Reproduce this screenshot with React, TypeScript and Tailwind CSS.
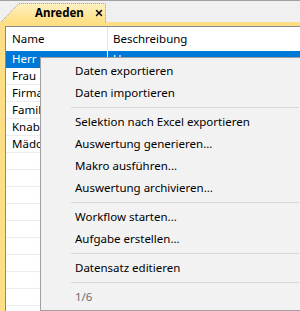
import { X } from "lucide-react"

const rows = [
  { name: "Herr", desc: "Herr" },
  { name: "Frau" },
  { name: "Firma" },
  { name: "Familie" },
  { name: "Knabe" },
  { name: "Mädchen" },
]

type Entry = { label: string; muted?: boolean } | "sep"

const menu: Entry[] = [
  { label: "Daten exportieren" },
  { label: "Daten importieren" },
  "sep",
  { label: "Selektion nach Excel exportieren" },
  { label: "Auswertung generieren..." },
  { label: "Makro ausführen..." },
  { label: "Auswertung archivieren..." },
  "sep",
  { label: "Workflow starten..." },
  { label: "Aufgabe erstellen..." },
  "sep",
  { label: "Datensatz editieren" },
  "sep",
  { label: "1/6", muted: true },
]

function Tab() {
  return (
    <div className="relative ml-[1px] mt-[2px] flex h-[19px] w-[105px] items-center">
      <svg className="absolute inset-0" width="105" height="19" viewBox="0 0 105 19">
        <defs>
          <linearGradient id="tabfill" x1="0" y1="0" x2="0" y2="1">
            <stop offset="0" stopColor="#fff1c0" />
            <stop offset="1" stopColor="#ffdf85" />
          </linearGradient>
        </defs>
        <polygon points="0,19 18,0.5 104.5,0.5 104.5,19" fill="url(#tabfill)" />
        <polyline points="0,19 18,0.5 104.5,0.5 104.5,19" fill="none" stroke="#9a9a9a" strokeWidth="1" strokeDasharray="1 1" />
      </svg>
      <span className="relative ml-[34px] text-[11.5px] font-bold text-black">Anreden</span>
      <X className="relative ml-[10px] h-[10px] w-[10px] text-black" strokeWidth={3.5} />
    </div>
  )
}

export default function App() {
  return (
    <div className="relative h-[311px] w-[300px] overflow-hidden bg-[#f0f0f0] font-['Noto_Sans',sans-serif] text-[11.5px] text-black">
      <div className="h-[1px] bg-[#a0a0a0]" />
      <Tab />
      <div className="h-[4px] bg-[#ffdf85]" />
      <div className="flex h-[290px]">
        <div className="w-[5px] bg-[#ffdf85]" />
        <div className="flex-1 border-l border-t border-[#8a8a8a] bg-white">
          <div className="flex h-[24px] items-center">
            <div className="w-[101px] pl-[6px]">Name</div>
            <div className="h-full w-px bg-[#e5e5e5]" />
            <div className="pl-[5px]">Beschreibung</div>
          </div>
          {rows.map((r, i) => (
            <div
              key={r.name}
              className={`flex h-[17px] items-center border-b ${i === 0 ? "border-[#0078d7] bg-[#0078d7] text-white" : "border-[#ececec]"}`}
            >
              <div className="w-[101px] pl-[6px]">{r.name}</div>
              <div className={`h-full w-px ${i === 0 ? "bg-white" : "bg-[#ececec]"}`} />
              <div className="pl-[5px]">{r.desc}</div>
            </div>
          ))}
          {[...Array(9)].map((_, i) => (
            <div key={i} className="h-[17px] border-b border-[#ececec]" />
          ))}
        </div>
      </div>

      <div className="absolute left-[40px] top-[57px] w-[262px] border border-[#a0a0a0] bg-[#f2f2f2] py-[2px] shadow-[2px_2px_3px_rgba(0,0,0,0.2)]">
        {menu.map((m, i) =>
          m === "sep" ? (
            <div key={i} className="flex h-[7px] items-center pl-[30px] pr-[2px]">
              <div className="h-px flex-1 bg-[#d7d7d7]" />
            </div>
          ) : (
            <div
              key={i}
              className={`flex h-[22px] items-center pl-[34px] ${m.muted ? "text-[#6d6d6d]" : ""}`}
            >
              {m.label}
            </div>
          )
        )}
      </div>
    </div>
  )
}
